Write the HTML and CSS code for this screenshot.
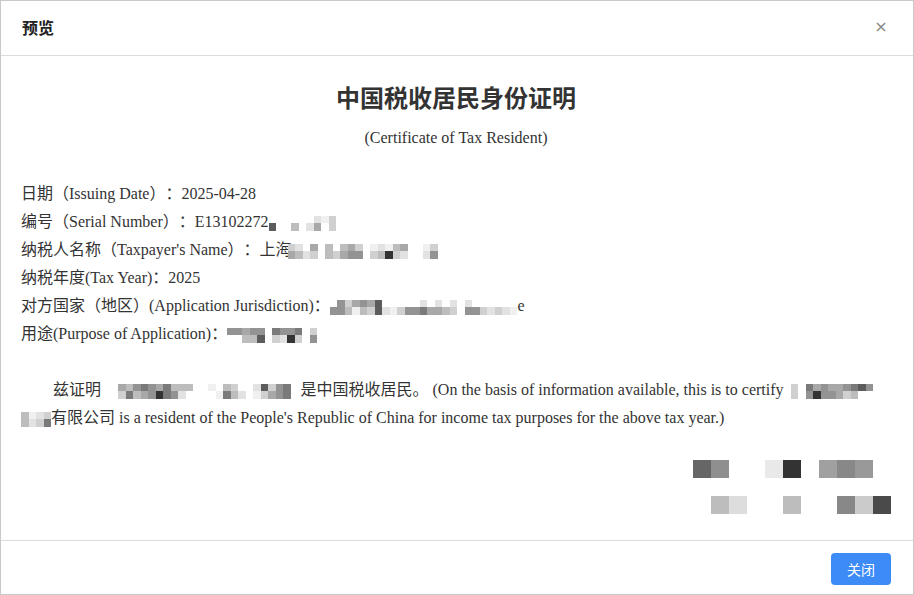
FILE: index.html
```html
<!DOCTYPE html>
<html lang="zh-CN">
<head>
<meta charset="utf-8">
<title>预览</title>
<link rel="stylesheet" href="styles.css">
</head>
<body>
<div class="dialog">
  <header class="dlg-head">
    <h1 class="dlg-title">预览</h1>
    <button class="dlg-close" type="button">×</button>
  </header>
  <main class="dlg-body">
    <h2 class="cert-title">中国税收居民身份证明</h2>
    <p class="cert-sub">(Certificate of Tax Resident)</p>
    <div class="info">
      <div class="row">日期（Issuing Date）：2025-04-28</div>
      <div class="row">编号（Serial Number）：E13102272<span class="mz"><i></i><i class="g8"></i><i></i><i></i><i></i><i></i><i></i><i class="g4"></i><i></i><i></i><i></i><i class="g2"></i><i class="g2"></i><i class="g5"></i><i class="g1"></i><i></i><i class="g3"></i><i class="g3"></i></span></div>
      <div class="row">纳税人名称（Taxpayer's Name）：上海<span class="mz ov"><i class="g3"></i><i class="g5"></i><i class="g2"></i><i class="g4"></i><i></i><i class="g2"></i><i class="g5"></i><i class="g3"></i><i></i><i></i><i class="g4"></i><i class="g4"></i><i></i><i class="g3"></i><i class="g4"></i><i class="g5"></i><i class="g5"></i><i class="g6"></i><i class="g3"></i><i class="g6"></i><i></i><i></i><i class="g1"></i><i class="g3"></i><i class="g2"></i><i class="g4"></i><i class="g1"></i><i class="g9"></i><i class="g4"></i><i class="g3"></i><i class="g5"></i><i class="g2"></i><i></i><i></i><i></i><i></i><i class="g1"></i><i class="g2"></i><i class="g3"></i><i class="g6"></i></span></div>
      <div class="row">纳税年度(Tax Year)：2025</div>
      <div class="row">对方国家（地区）(Application Jurisdiction)：<span class="mz"><i></i><i class="g6"></i><i class="g6"></i><i class="g6"></i><i class="g3"></i><i class="g4"></i><i class="g5"></i><i class="g1"></i><i class="g6"></i><i class="g4"></i><i class="g5"></i><i class="g3"></i><i class="g8"></i><i class="g8"></i><i></i><i class="g2"></i><i></i><i class="g1"></i><i></i><i class="g3"></i><i></i><i class="g6"></i><i></i><i class="g6"></i><i class="g2"></i><i class="g7"></i><i></i><i class="g5"></i><i class="g2"></i><i class="g5"></i><i></i><i class="g4"></i><i class="g2"></i><i class="g3"></i><i></i><i></i><i class="g2"></i><i class="g6"></i><i></i><i class="g6"></i><i></i><i class="g3"></i><i></i><i class="g2"></i><i></i><i class="g3"></i><i></i><i class="g2"></i><i></i><i class="g1"></i></span>e</div>
      <div class="row">用途(Purpose of Application)：<span class="mz"><i class="g6"></i><i></i><i class="g6"></i><i></i><i class="g5"></i><i class="g4"></i><i class="g6"></i><i class="g4"></i><i class="g6"></i><i class="g8"></i><i></i><i></i><i class="g7"></i><i class="g3"></i><i class="g6"></i><i class="g2"></i><i class="g6"></i><i class="g9"></i><i class="g7"></i><i class="g3"></i><i></i><i></i><i class="g3"></i><i class="g6"></i></span></div>
    </div>
    <p class="statement">兹证明<span class="mz gapr"><i></i><i></i><i></i><i></i><i class="g5"></i><i class="g3"></i><i class="g4"></i><i class="g7"></i><i class="g6"></i><i class="g4"></i><i class="g7"></i><i class="g5"></i><i class="g6"></i><i class="g6"></i><i class="g5"></i><i class="g9"></i><i class="g7"></i><i class="g7"></i><i class="g4"></i><i class="g6"></i><i class="g4"></i><i class="g2"></i><i class="g4"></i><i></i><i></i><i></i><i></i><i></i><i class="g1"></i><i></i><i></i><i class="g1"></i><i class="g4"></i><i class="g7"></i><i class="g3"></i><i class="g4"></i><i></i><i class="g2"></i><i></i><i></i><i class="g2"></i><i class="g1"></i><i class="g8"></i><i class="g3"></i><i class="g3"></i><i class="g5"></i><i class="g6"></i><i class="g6"></i><i class="g7"></i><i class="g7"></i></span>是中国税收居民。 (On the basis of information available, this is to certify <span class="mz gapl"><i class="g3"></i><i class="g3"></i><i></i><i></i><i class="g7"></i><i class="g6"></i><i class="g5"></i><i class="g9"></i><i class="g6"></i><i class="g6"></i><i class="g5"></i><i class="g6"></i><i class="g5"></i><i class="g5"></i><i class="g6"></i><i class="g3"></i><i class="g7"></i><i class="g4"></i><i class="g8"></i><i></i><i class="g6"></i><i></i><i></i><i></i></span><br><span class="mz"><i class="g4"></i><i class="g4"></i><i class="g1"></i><i class="g2"></i><i class="g2"></i><i class="g3"></i><i class="g3"></i><i class="g7"></i></span>有限公司 is a resident of the People's Republic of China for income tax purposes for the above tax year.)</p>
    <div class="seal">
      <i class="s1"></i><i class="s2"></i><i></i><i></i><i class="s3"></i><i class="s4"></i><i></i><i class="s5"></i><i class="s6"></i><i class="s7"></i><i></i>
      <i></i><i class="s8"></i><i class="s9"></i><i></i><i></i><i class="s8"></i><i></i><i></i><i class="s6"></i><i class="s10"></i><i class="s11"></i>
    </div>
  </main>
  <footer class="dlg-foot">
    <button class="btn-primary" type="button">关闭</button>
  </footer>
</div>
</body>
</html>
```
FILE: styles.css
```css
* { box-sizing: border-box; }
html, body { margin: 0; padding: 0; background: #fff; }
body {
  width: 914px;
  height: 595px;
  overflow: hidden;
  font-family: "Liberation Serif", "Noto Sans CJK SC", serif;
  color: #333;
  text-spacing-trim: space-all;
}
.dialog {
  width: 914px;
  height: 595px;
  border: 1px solid #c9c9c9;
  display: flex;
  flex-direction: column;
  background: #fff;
}
.dlg-head {
  height: 55px;
  flex: none;
  border-bottom: 1px solid #dcdcdc;
  display: flex;
  align-items: center;
  justify-content: space-between;
  padding: 0 24px 3px 21px;
}
.dlg-title {
  margin: 0;
  font-family: "Noto Sans CJK SC", sans-serif;
  font-size: 16px;
  font-weight: 700;
  color: #222;
  line-height: 22px;
}
.dlg-close {
  border: none;
  background: none;
  padding: 0;
  width: 16px;
  height: 20px;
  font-family: "DejaVu Sans", sans-serif;
  font-size: 16px;
  line-height: 20px;
  color: #888;
  cursor: pointer;
}
.dlg-body {
  flex: 1;
  padding: 26px 22px 0 20px;
  font-size: 16px;
}
.cert-title {
  margin: 0 0 14px;
  text-align: center;
  font-family: "Noto Sans CJK SC", sans-serif;
  font-size: 24px;
  font-weight: 700;
  line-height: 30px;
  color: #333;
}
.cert-sub {
  margin: 0;
  text-align: center;
  line-height: 24px;
  font-size: 16px;
}
.info {
  margin-top: 30px;
}
.row {
  line-height: 28px;
  white-space: nowrap;
}
.statement {
  margin: 28px 0 0;
  line-height: 28px;
  text-indent: 32px;
}
.mz {
  display: inline-grid;
  grid-auto-flow: column;
  grid-template-rows: 7.5px 7.5px;
  grid-auto-columns: 7.5px;
  vertical-align: 4px;
  margin-top: -6px;
  margin-bottom: -6px;
  text-indent: 0;
}
.mz.ov { margin-left: -4px; }
.mz.gapr { margin-left: 2px; margin-right: 10px; }
.mz.gapl { margin-left: 3px; }
.mz i { display: block; }
.g1 { background: #f0f0f0; }
.g2 { background: #e2e2e2; }
.g3 { background: #d0d0d0; }
.g4 { background: #bdbdbd; }
.g5 { background: #a8a8a8; }
.g6 { background: #939393; }
.g7 { background: #7a7a7a; }
.g8 { background: #5c5c5c; }
.g9 { background: #333; }
.seal {
  margin: 28px 0 0 auto;
  width: 198px;
  display: grid;
  grid-template-columns: repeat(11, 18px);
  grid-template-rows: 18px 18px;
  row-gap: 18px;
}
.seal i { display: block; }
.s1 { background: #666; }
.s2 { background: #8f8f8f; }
.s3 { background: #e9e9e9; }
.s4 { background: #333; }
.s5 { background: #a0a0a0; }
.s6 { background: #888; }
.s7 { background: #999; }
.s8 { background: #bdbdbd; }
.s9 { background: #ddd; }
.s10 { background: #cbcbcb; }
.s11 { background: #4a4a4a; }
.dlg-foot {
  flex: none;
  height: 54px;
  border-top: 1px solid #dcdcdc;
  display: flex;
  justify-content: flex-end;
  align-items: flex-start;
  padding: 12px 22px 0 0;
}
.btn-primary {
  width: 60px;
  height: 32px;
  border: none;
  border-radius: 4px;
  background: #3d8bf7;
  color: #fff;
  font-family: "Noto Sans CJK SC", sans-serif;
  font-size: 14px;
  line-height: 32px;
  padding: 0;
  cursor: pointer;
}
```
